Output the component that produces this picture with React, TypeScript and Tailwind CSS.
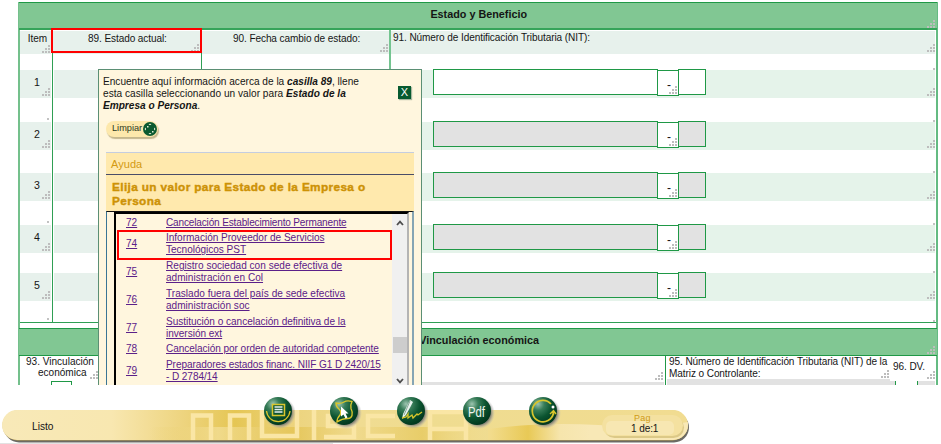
import React from "react";

const FONT = "font-['Liberation_Sans',Arial,sans-serif]";

function Grip({ className = "" }: { className?: string }) {
  return (
    <svg width="8" height="8" viewBox="0 0 8 8" className={`block shrink-0 ${className}`} fill="#bdbdbd">
      <rect x="0" y="6" width="2" height="2" />
      <rect x="3" y="6" width="2" height="2" />
      <rect x="6" y="6" width="2" height="2" />
      <rect x="3" y="3" width="2" height="2" />
      <rect x="6" y="3" width="2" height="2" />
      <rect x="6" y="0" width="2" height="2" />
    </svg>
  );
}

function Dot() {
  return <span className="block size-0.5 bg-[#c2c2c2]" />;
}

const rows = [
  { n: 1, pitch: "h-[52px]", field: "bg-white", dot: true },
  { n: 2, pitch: "h-[51px]", field: "bg-[#e2e2e2]", dot: false },
  { n: 3, pitch: "h-[52px]", field: "bg-[#e2e2e2]", dot: true },
  { n: 4, pitch: "h-[48px]", field: "bg-[#e2e2e2]", dot: false },
  { n: 5, pitch: "h-[49px]", field: "bg-[#e2e2e2]", dot: true },
];

function FormRow({ n, pitch, field, dot }: (typeof rows)[number]) {
  return (
    <div className={`flex ${pitch}`}>
      <div className="flex w-[33px] flex-col justify-between border-r border-[#2f9f54] pr-px">
        <div className="flex h-7 justify-end bg-[#e7f1ec]">
          <span className="mt-[6px] w-3 text-right text-[10.6px] leading-[12px]">{n}</span>
          <Grip className="mt-[18px] mr-px ml-0.5" />
        </div>
        {dot && <div className="flex justify-end pr-0.5 pb-0.5"><Dot /></div>}
      </div>
      <div className="w-[149px] border-r border-[#2f9f54] pl-px"><div className="h-7 bg-[#e7f1ec]" /></div>
      <div className="w-[189px] border-r-2 border-[#74c490]"><div className="h-7 bg-[#e7f1ec]" /></div>
      <div className="flex flex-1 flex-col justify-between pr-px">
        <div className="flex h-7 bg-[#e5f3ea] pl-[42px]">
          <div className={`-mt-px h-[26px] w-[225px] border border-[#1f9846] ${field}`} />
          <div className="-ml-px flex h-[26px] w-[22px] items-end border border-[#1f9846] bg-white pb-px pl-[9px]">
            <span className="w-1 text-[12px] leading-[17px]">-</span>
            <Grip className="-ml-[2px]" />
          </div>
          <div className={`-mt-px -ml-px h-[26px] w-7 border border-[#1f9846] ${field}`} />
          <Grip className="mt-[18px] ml-auto" />
        </div>
        <div className="flex justify-end"><Dot /></div>
      </div>
    </div>
  );
}

const options = [
  { code: "72", fit: "tracking-[-0.16px]", lines: ["Cancelación Establecimiento Permanente"] },
  { code: "74", fit: "tracking-[-0.02px]", lines: ["Información Proveedor de Servicios", "Tecnológicos PST"] },
  { code: "75", fit: "tracking-[0.02px]", lines: ["Registro sociedad con sede efectiva de", "administración en Col"] },
  { code: "76", fit: "tracking-[0.02px]", lines: ["Traslado fuera del país de sede efectiva", "administración soc"] },
  { code: "77", fit: "tracking-[-0.02px]", lines: ["Sustitución o cancelación definitiva de la", "inversión ext"] },
  { code: "78", fit: "tracking-[-0.05px]", lines: ["Cancelación por orden de autoridad competente"] },
  { code: "79", fit: "tracking-[-0.08px]", lines: ["Preparadores estados financ. NIIF G1 D 2420/15", "- D 2784/14"] },
];

function HelpPopup() {
  return (
    <div className="absolute top-[69px] left-[98px] h-[316px] w-[324px] border-x border-t border-[#5b8f74] bg-[#fff6de]">
      <div className="flex h-[51px] justify-between pt-[6px] pr-[10px] pl-[4px]">
        <p className="text-[10.1px] leading-[11.9px] whitespace-nowrap">
          Encuentre aquí información acerca de la <b><i>casilla 89</i></b>, llene<br />
          <span className="tracking-[0.03px]">esta casilla seleccionando un valor para <b><i>Estado de la</i></b></span><br />
          <b><i>Empresa o Persona</i></b>.
        </p>
        <div className="mt-[10px] flex size-[13px] items-center justify-center bg-[#075a30] text-[11px] leading-none text-white shadow-[1px_1px_1px_#a9b8a0]">X</div>
      </div>
      <div className="ml-[7px] flex h-[16px] w-[52px] items-center rounded-full bg-[#fde8ac] pl-[6px] shadow-[1px_2px_1px_#c5b78d]">
        <span className="w-[31px] text-[9.2px] leading-none text-[#2b3a20]">Limpiar</span>
        <svg width="14" height="14" viewBox="0 0 14 14">
          <circle cx="7" cy="7" r="7" fill="#0b5a30" />
          <g fill="#e6eed6">
            <path d="M7 1.500l1.500 1.500h-3zM7 12.500l1.500-1.500h-3zM1.500 7l1.500-1.500v3zM12.500 7l-1.500-1.500v3z" />
            <rect x="4" y="4" width="1.500" height="1.500" /><rect x="9" y="9" width="1.500" height="1.500" />
          </g>
        </svg>
      </div>
      <div className="mx-[7px] mt-[15px]">
        <div className="h-[22px] border-t border-[#c4cde0] bg-[#ffe9ad] pl-[5px] text-[11px] leading-[23px] tracking-[0.05px] text-[#d39a12]">Ayuda</div>
        <div className="h-[37px] border-t border-[#4a4d68] bg-[#ffe9ad] pt-[5px] pl-[6px] text-[11.8px] leading-[14px] font-bold tracking-[0.37px] whitespace-nowrap text-[#cd9206] [-webkit-text-stroke:0.4px_#cd9206]">
          Elija un valor para Estado de la Empresa o<br />Persona
        </div>
        <div className="flex h-[174px] border-t border-r-2 border-l border-t-[#111] border-r-[#86a5b4] border-l-[#3a7595] pl-[7px]">
          <div className="flex w-[295px] border-t-2 border-r-2 border-l-2 border-t-black border-r-[#b4b4b4] border-l-black">
            <ul className="flex flex-1 flex-col gap-[3.75px] overflow-hidden pt-[2.5px] text-[10.05px] leading-[12px] text-[#5b2089] underline">
              {options.map(({ code, fit, lines }) => (
                <li key={code} className="flex shrink-0 items-center whitespace-nowrap">
                  <span className="w-10 pl-[10px]">{code}</span>
                  <span className={`pl-[10px] ${fit}`}>{lines.map((l) => <span key={l} className="block">{l}</span>)}</span>
                </li>
              ))}
            </ul>
            <div className="flex w-[15px] flex-col items-center bg-[#f0f0f0]">
              <svg width="8" height="6" viewBox="0 0 8 6" className="mt-[6px]" fill="none" stroke="#4d4d4d" strokeWidth="1.8"><path d="M1 5l3-3.3L7 5" /></svg>
              <div className="mt-[111px] h-4 w-[14px] bg-[#cdcdcd]" />
              <svg width="8" height="6" viewBox="0 0 8 6" className="mt-[25px]" fill="none" stroke="#4d4d4d" strokeWidth="1.8"><path d="M1 1l3 3.3L7 1" /></svg>
            </div>
          </div>
        </div>
      </div>
      <div className="absolute top-[160px] left-[18px] h-[30px] w-[275px] border-2 border-[#f00]" />
    </div>
  );
}

function Ball({ id, children }: { id: string; children?: React.ReactNode }) {
  return (
    <svg width="32" height="32" viewBox="0 0 32 32" className="block">
      <defs>
        <radialGradient id={id} cx="32%" cy="25%" r="75%">
          <stop offset="0" stopColor="#9cc4af" />
          <stop offset=".3" stopColor="#387d59" />
          <stop offset=".65" stopColor="#0b5430" />
          <stop offset="1" stopColor="#03391f" />
        </radialGradient>
        <radialGradient id={`${id}-shade`}>
          <stop offset=".75" stopColor="#777" stopOpacity=".8" />
          <stop offset="1" stopColor="#bbb" stopOpacity="0" />
        </radialGradient>
      </defs>
      <circle cx="16" cy="16" r="16" fill={`url(#${id}-shade)`} />
      <circle cx="14" cy="14" r="14" fill={`url(#${id})`} />
      {children}
    </svg>
  );
}

function BottomBar() {
  return (
    <div className="relative h-[59px]">
      <svg width="941" height="59" viewBox="0 385 941 59" className="block">
        <defs>
          <linearGradient id="bar" gradientUnits="userSpaceOnUse" x1="2" x2="688" y1="0" y2="0">
            <stop offset="0" stopColor="#f8e9b8" />
            <stop offset=".16" stopColor="#f8e7b0" />
            <stop offset=".27" stopColor="#edd37c" />
            <stop offset=".34" stopColor="#e5c654" />
            <stop offset=".42" stopColor="#ecd37d" />
            <stop offset=".52" stopColor="#f0dc92" />
            <stop offset=".6" stopColor="#efdc90" />
            <stop offset="1" stopColor="#f1dc91" />
          </linearGradient>
          <linearGradient id="glow" gradientUnits="userSpaceOnUse" x1="490" x2="590" y1="0" y2="0">
            <stop offset="0" stopColor="#f2dc8d" />
            <stop offset=".38" stopColor="#e8c956" />
            <stop offset=".7" stopColor="#f6e5ac" />
            <stop offset="1" stopColor="#f8e8b6" />
          </linearGradient>
          <linearGradient id="low" gradientUnits="userSpaceOnUse" x1="150" x2="490" y1="0" y2="0">
            <stop offset="0" stopColor="#e9cc66" stopOpacity="0" />
            <stop offset=".2" stopColor="#f3df98" />
            <stop offset=".42" stopColor="#e3c250" />
            <stop offset=".6" stopColor="#f0da8d" />
            <stop offset=".8" stopColor="#e6c85c" />
            <stop offset="1" stopColor="#f2dc8d" stopOpacity="0" />
          </linearGradient>
          <clipPath id="bar-shape"><rect x="2" y="410" width="686" height="30" rx="15" /></clipPath>
        </defs>
        <rect x="0" y="443" width="333" height="1" fill="#e2e2e2" />
        <rect x="4" y="412.500" width="685" height="30" rx="15" fill="#6c6a64" />
        <rect x="2.500" y="410.500" width="685" height="30" rx="15" fill="#b59d55" />
        <g clipPath="url(#bar-shape)">
          <rect x="2" y="410" width="686" height="30" fill="url(#bar)" />
          <rect x="150" y="427" width="340" height="13" fill="url(#low)" opacity=".75" />
          <path d="M488 440v-11q50-7 110-4t90-3v18z" fill="url(#glow)" />
          <g fill="none" stroke="#fae6a5" strokeWidth="4.500">
            <path d="M193 440v-24.500h18V440M230 440v-24.500h19V440" />
            <path d="M262 410v26h35v-26" />
            <path d="M314 410v30M357 416h-29v10h26v11h-30" />
            <path d="M395 416h-27v20h27" />
            <path d="M430 410v30M466 410v30M430 412h36M430 429h36" />
          </g>
        </g>
        <rect x="604" y="417" width="80" height="21" rx="10.500" fill="#dcc987" />
        <rect x="602" y="415" width="81" height="21" rx="10.500" fill="#f4e1a0" />
        <rect x="606" y="421" width="68" height="14" rx="5" fill="#f8e8b6" opacity=".8" />
      </svg>
      <span className="absolute top-[36px] left-[32px] text-[10.2px] leading-[12px]">Listo</span>
      <span className="absolute top-[29px] left-[634px] text-[9px] leading-[9px] tracking-[0.2px] text-[#cf9b14]">Pag</span>
      <span className="absolute top-[39px] left-[631px] text-[10.05px] leading-[9px] tracking-[-0.1px] whitespace-nowrap">1 de:1</span>
      <div className="absolute top-[12px] left-[264px] flex gap-[34.300px]">
        <Ball id="b1">
          <rect x="8.500" y="7.500" width="12" height="11" fill="#0b5430" stroke="#d8c52d" strokeWidth="1.500" />
          <path d="M10.500 10h8M10.500 12.500h8M10.500 15h8" stroke="#e8f0f0" strokeWidth="1.300" />
          <path d="M2.500 14a11.800 11.800 0 0 0 23.500 0" fill="none" stroke="#d8c52d" strokeWidth="1.300" />
        </Ball>
        <Ball id="b2">
          <path d="M6 6q5 1 8-1 3-2 8-.5-2 4-1 7 2 4 1 7-1 3-4 3-6 0-11 3.500 0-4 3-7 2-3-1-6-3-2-3-6z" fill="none" stroke="#d8c52d" strokeWidth="1.400" />
          <path d="M11 9.500v10l2.500-2 2 4 2-1-2-4h3z" fill="#fff" />
        </Ball>
        <Ball id="b3">
          <path d="M13 3L6 17l-1 5 4-4 7-13z" fill="#e9f3ee" />
          <path d="M13 4L7 18" stroke="#628872" strokeWidth=".7" />
          <path d="M5 21l4-1 2-3v4l4-3 1 3 4-4 1 1 4-3" fill="none" stroke="#d8c52d" strokeWidth="1.300" />
        </Ball>
        <Ball id="b4">
          <text x="5" y="20" fill="#f0f5f0" fontSize="15" fontFamily="Liberation Sans" textLength="17" lengthAdjust="spacingAndGlyphs">Pdf</text>
        </Ball>
        <Ball id="b5">
          <path d="M22 7A10.700 10.700 0 1 0 24.500 16" fill="none" stroke="#d8c52d" strokeWidth="1.700" />
          <path d="M21 17l3.500-3.500 2.500 3.500M24.500 14v4" fill="none" stroke="#d8c52d" strokeWidth="1.400" />
          <circle cx="24" cy="10" r="1.500" fill="#fff" />
        </Ball>
      </div>
    </div>
  );
}

export default function App() {
  return (
    <div className={`h-[444px] w-[941px] overflow-hidden bg-white text-[#151515] ${FONT}`}>
      <div className="relative h-[385px] overflow-hidden pt-[2px] pl-[18px]">
        <div className="w-[920px] border-r-2 border-l-2 border-r-[#64bb82] border-l-[#74c08c]">
          <div className="-mx-px flex h-7 border-t border-b-2 border-t-[#1f9846] border-b-[#36a45a] bg-[#81c793]">
            <h2 className="w-[508px] pt-[5px] text-right text-[10.8px] leading-[12px] font-bold">Estado y Beneficio</h2>
            <Grip className="mt-[17px] mr-0.5 ml-auto" />
          </div>
          <div className="flex h-10 text-[10.05px] leading-[12px] tracking-[-0.09px] whitespace-nowrap">
            <div className="w-[33px] border-r border-[#2f9f54] pt-px pr-px">
              <div className="flex h-[23px] justify-end bg-[#e7f1ec]"><span className="mt-[2px] -mr-[5px]">Item</span><Grip className="mt-[14px] mr-px" /></div>
            </div>
            <div className="w-[149px] border-r border-[#2f9f54] pt-px">
              <div className="flex h-[23px] bg-[#e7f1ec]"><span className="mt-[2px] w-[138px] pl-[35px]">89. Estado actual:</span><Grip className="mt-[13px]" /></div>
            </div>
            <div className="w-[189px] border-r-2 border-[#74c490] pt-px">
              <div className="flex h-[23px] bg-[#e7f1ec]"><span className="mt-[2px] w-[178px] pl-[31px]">90. Fecha cambio de estado:</span><Grip className="mt-[13px]" /></div>
            </div>
            <div className="flex flex-1 flex-col justify-between pt-px pr-px">
              <div className="flex h-[23px] justify-between bg-[#e7f1ec]"><span className="mt-[1px] pl-[2px]">91. Número de Identificación Tributaria (NIT):</span><Grip className="mt-[13px]" /></div>
              <div className="flex justify-end"><Dot /></div>
            </div>
          </div>
          {rows.map((r) => <FormRow key={r.n} {...r} />)}
          <div className="h-[6px] border-t border-[#2f9f54]" />
          <div className="-mx-px flex h-7 border-y border-[#1f9846] bg-[#81c793]">
            <h2 className="w-[520px] pt-[5px] text-right text-[10.8px] leading-[12px] font-bold">Vinculación económica</h2>
            <Grip className="mt-[17px] mr-0.5 ml-auto" />
          </div>
          <div className="flex h-[29px] text-[10.05px] tracking-[-0.09px] whitespace-nowrap">
            <div className="w-[78px] pt-px">
              <div className="flex h-[24px]"><p className="w-[70px] pl-[6px] leading-[10.5px] tracking-normal">93. Vinculación<br /><span className="pl-[12px]">económica</span></p><Grip className="mt-[14px]" /></div>
              <div className="ml-[31px] h-[4px] w-[21px] border-x border-t border-[#1f9846]" />
            </div>
            <div className="w-[568px] border-r border-[#1f9846] pr-px">
              <div className="flex h-[26px] items-end justify-end pr-px pb-0.5"><Grip /></div>
              <div className="h-[3px] bg-[#e2e2e2]" />
            </div>
            <div className="w-[224px] pl-px">
              <div className="flex h-[23px] pl-[2px] leading-[11.9px]"><p className="w-[212px]">95. Número de Identificación Tributaria (NIT) de la<br />Matriz o Controlante:</p><Grip className="mt-[14px]" /></div>
              <div className="h-[6px] bg-[#e2e2e2]" />
            </div>
            <div className="flex-1 pr-px">
              <div className="flex h-[25px] justify-between pl-[3px]"><span className="mt-[5px] -mr-1 leading-[12px]">96. DV.</span><Grip className="mt-[15px]" /></div>
              <div className="flex h-[4px]">
                <div className="w-[5px] bg-[#e2e2e2]" />
                <div className="w-[23px] border-x border-[#1f9846]" />
                <div className="flex-1 bg-[#e2e2e2]" />
              </div>
            </div>
          </div>
        </div>
        <div className="absolute top-[28px] left-[51px] h-[25px] w-[151px] border-2 border-[#f00]" />
        <HelpPopup />
      </div>
      <BottomBar />
    </div>
  );
}
